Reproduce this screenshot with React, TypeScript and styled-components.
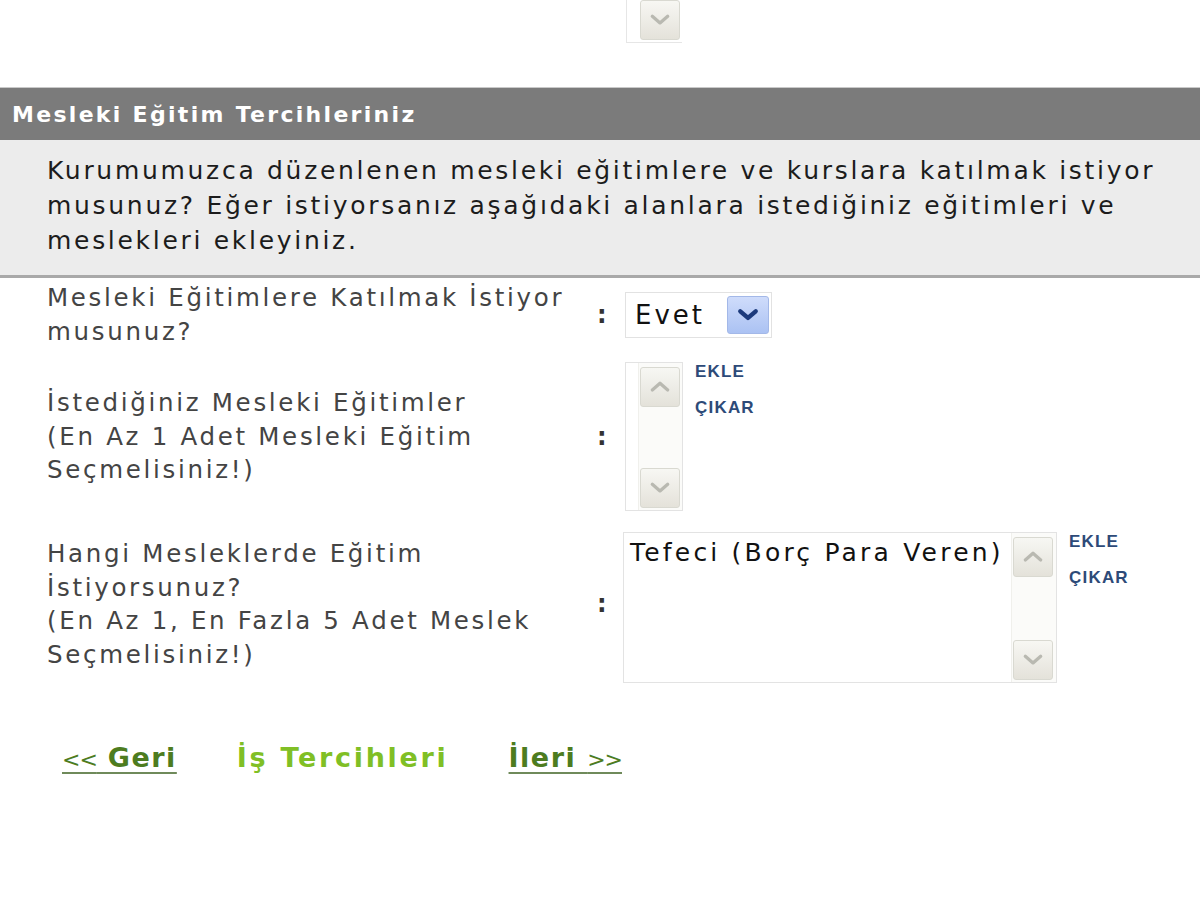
import React from "react";
import styled, { createGlobalStyle } from "styled-components";

const Global = createGlobalStyle`
  html, body { margin: 0; padding: 0; background: #ffffff; }
  body { font-family: "DejaVu Sans", Verdana, sans-serif; color: #222; }
`;

const Page = styled.div`
  width: 1200px;
  min-height: 898px;
  background: #fff;
  display: flex;
  flex-direction: column;
`;

const TopStub = styled.div`
  display: flex;
  padding-left: 626px;
  height: 44px;
  margin-bottom: 43px;
`;

const ListTail = styled.div`
  width: 56px;
  height: 43px;
  border-left: 1px solid #e6e6e6;
  border-bottom: 1px solid #e6e6e6;
  display: flex;
  justify-content: flex-end;
  align-items: flex-end;
  padding-right: 2px;
  padding-bottom: 2px;
  box-sizing: border-box;
`;

const SectionHeader = styled.div`
  height: 52px;
  background: #7b7b7b;
  border-top: 1px solid #c9c9c9;
  display: flex;
  align-items: center;
  padding-left: 12px;
  color: #fff;
  font-family: "DejaVu Sans", Verdana, sans-serif;
  font-weight: bold;
  font-size: 22px;
  letter-spacing: 2.3px;
`;

const IntroPanel = styled.div`
  background: #ececec;
  border-bottom: 3px solid #a9a9a9;
  padding: 13px 0 17px 47px;
  font-size: 25px;
  line-height: 35px;
  letter-spacing: 2.7px;
  color: #1c1c1c;
  white-space: nowrap;
`;

const Form = styled.div`
  display: grid;
  grid-template-columns: 540px 38px auto;
  padding: 3px 0 0 47px;
  row-gap: 14px;
  align-items: center;
`;

const Label = styled.div`
  font-size: 24.5px;
  line-height: 33.5px;
  letter-spacing: 2.7px;
  color: #444;
  white-space: nowrap;
`;

const Colon = styled.div`
  font-size: 24px;
  color: #333;
  padding-left: 10px;
  font-weight: bold;
`;

const Control = styled.div<{ $offset?: number; $top?: number }>`
  display: flex;
  align-items: flex-start;
  gap: 12px;
  margin-left: ${(p) => p.$offset ?? 0}px;
  margin-top: ${(p) => p.$top ?? 0}px;
`;

const Select = styled.div`
  width: 147px;
  height: 46px;
  box-sizing: border-box;
  border: 1px solid #e2e2e2;
  display: flex;
  align-items: center;
  justify-content: space-between;
  padding: 0 2px 0 9px;
  font-size: 26px;
  letter-spacing: 3px;
  color: #111;
`;

const DropButton = styled.div`
  width: 42px;
  height: 38px;
  box-sizing: border-box;
  border: 1px solid #a3b8e8;
  border-radius: 3px;
  background: linear-gradient(#cfdcfb, #abc2f3);
  display: flex;
  align-items: center;
  justify-content: center;
`;

const ListBox = styled.div<{ $w: number; $h: number }>`
  width: ${(p) => p.$w}px;
  height: ${(p) => p.$h}px;
  box-sizing: border-box;
  border: 1px solid #e3e3e3;
  display: flex;
  background: #fff;
`;

const ListContent = styled.div`
  flex: 1;
  padding: 2px 6px;
  font-size: 25px;
  line-height: 36px;
  letter-spacing: 3.2px;
  color: #111;
  white-space: nowrap;
  overflow: hidden;
`;

const ScrollBar = styled.div`
  width: 42px;
  display: flex;
  flex-direction: column;
  justify-content: space-between;
  padding: 4px 1px 2px 1px;
  background: #fbfbf9;
  border-left: 1px solid #f0f0ec;
`;

const ScrollButton = styled.div`
  width: 40px;
  height: 40px;
  box-sizing: border-box;
  border: 1px solid #d9d9d1;
  border-radius: 3px;
  background: linear-gradient(#f7f7f3, #e4e2da);
  display: flex;
  align-items: center;
  justify-content: center;
`;

const ActionLinks = styled.div`
  display: flex;
  flex-direction: column;
  gap: 10px;
  margin-top: -3px;
`;

const ActionLink = styled.a`
  font-family: "Liberation Sans", Arial, sans-serif;
  font-weight: bold;
  font-size: 17px;
  line-height: 26px;
  color: #2d4a78;
  letter-spacing: 1.2px;
  text-decoration: none;
  cursor: pointer;
`;

const Nav = styled.div`
  display: flex;
  align-items: center;
  gap: 60px;
  padding: 59px 0 0 62px;
  font-family: "DejaVu Sans", Tahoma, sans-serif;
  font-weight: bold;
  font-size: 27px;
`;

const NavLink = styled.a<{ $active?: boolean }>`
  color: ${(p) => (p.$active ? "#80bf25" : "#4d7c1f")};
  text-decoration: ${(p) => (p.$active ? "none" : "underline")};
  text-decoration-color: #6f8a5a;
  text-decoration-thickness: 2px;
  text-underline-offset: 5px;
  letter-spacing: ${(p) => (p.$active ? 2.7 : 1.5)}px;
  cursor: pointer;
`;

const Arrows = styled.span`
  font-size: 22px;
  letter-spacing: -1px;
  font-weight: normal;
`;

const Chevron = ({ dir, color, w = 3, size = 22 }: { dir: "up" | "down"; color: string; w?: number; size?: number }) => (
  <svg width={size} height={size * 0.6} viewBox="0 0 20 12">
    {dir === "down" ? (
      <polyline points="3,3 10,9 17,3" fill="none" stroke={color} strokeWidth={w} strokeLinecap="round" strokeLinejoin="round" />
    ) : (
      <polyline points="3,9 10,3 17,9" fill="none" stroke={color} strokeWidth={w} strokeLinecap="round" strokeLinejoin="round" />
    )}
  </svg>
);

const Scroll = () => (
  <ScrollBar>
    <ScrollButton>
      <Chevron dir="up" color="#b9b9b1" />
    </ScrollButton>
    <ScrollButton>
      <Chevron dir="down" color="#b9b9b1" />
    </ScrollButton>
  </ScrollBar>
);

const Actions = () => (
  <ActionLinks>
    <ActionLink>EKLE</ActionLink>
    <ActionLink>ÇIKAR</ActionLink>
  </ActionLinks>
);

export default function App() {
  return (
    <Page>
      <Global />
      <TopStub>
        <ListTail>
          <ScrollButton>
            <Chevron dir="down" color="#b9b9b1" />
          </ScrollButton>
        </ListTail>
      </TopStub>
      <SectionHeader>Mesleki Eğitim Tercihleriniz</SectionHeader>
      <IntroPanel>
        Kurumumuzca düzenlenen mesleki eğitimlere ve kurslara katılmak istiyor
        <br />
        musunuz? Eğer istiyorsanız aşağıdaki alanlara istediğiniz eğitimleri ve
        <br />
        meslekleri ekleyiniz.
      </IntroPanel>
      <Form>
        <Label>
          Mesleki Eğitimlere Katılmak İstiyor
          <br />
          musunuz?
        </Label>
        <Colon>:</Colon>
        <Control>
          <Select>
            <span>Evet</span>
            <DropButton>
              <Chevron dir="down" color="#1c3a7c" w={4} size={22} />
            </DropButton>
          </Select>
        </Control>

        <Label>
          İstediğiniz Mesleki Eğitimler
          <br />
          (En Az 1 Adet Mesleki Eğitim
          <br />
          Seçmelisiniz!)
        </Label>
        <Colon>:</Colon>
        <Control>
          <ListBox $w={58} $h={149}>
            <ListContent />
            <Scroll />
          </ListBox>
          <Actions />
        </Control>

        <Label>
          Hangi Mesleklerde Eğitim
          <br />
          İstiyorsunuz?
          <br />
          (En Az 1, En Fazla 5 Adet Meslek
          <br />
          Seçmelisiniz!)
        </Label>
        <Colon>:</Colon>
        <Control $offset={-2} $top={7}>
          <ListBox $w={434} $h={151}>
            <ListContent>Tefeci (Borç Para Veren)</ListContent>
            <Scroll />
          </ListBox>
          <Actions />
        </Control>
      </Form>
      <Nav>
        <NavLink>
          <Arrows>&lt;&lt;</Arrows> Geri
        </NavLink>
        <NavLink $active>İş Tercihleri</NavLink>
        <NavLink>
          İleri <Arrows>&gt;&gt;</Arrows>
        </NavLink>
      </Nav>
    </Page>
  );
}
